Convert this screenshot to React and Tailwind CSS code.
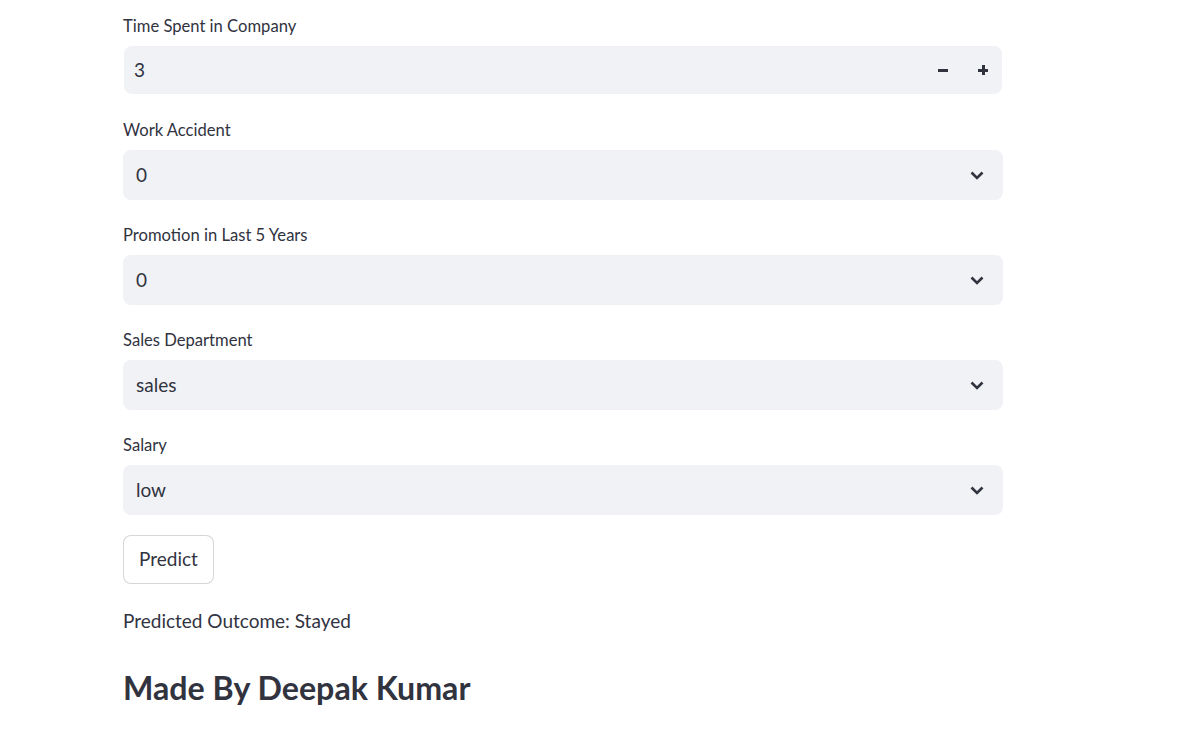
import React from 'react';

const font = { fontFamily: 'Lato, "Noto Sans", sans-serif' };

const Label = ({ children }) => (
  <div className="h-[28px] text-[16.6px] leading-[17px] text-[#31333F]">{children}</div>
);

const Chevron = () => (
  <svg width="14" height="9" viewBox="0 0 14 9" fill="none">
    <path d="M1.5 1.5 L7 7 L12.5 1.5" stroke="#31333F" strokeWidth="2.6" />
  </svg>
);

const SelectBox = ({ label, value }) => (
  <div className="flex flex-col">
    <Label>{label}</Label>
    <div className="flex h-[50px] w-[880px] items-center justify-between rounded-[8px] bg-[#F0F2F6] pl-[13px] pr-[19px]">
      <span className="text-[19px] text-[#31333F]">{value}</span>
      <Chevron />
    </div>
  </div>
);

const App = () => {
  return (
    <div className="min-h-[735px] bg-white" style={font}>
      <div className="flex w-[1003px] flex-col pl-[123px] pt-[18px]">
        <div className="flex flex-col">
          <Label>Time Spent in Company</Label>
          <div className="ml-px flex h-[48px] w-[878px] items-center justify-between rounded-[8px] bg-[#F0F2F6] pl-[10px] pr-[14px]">
            <span className="text-[19px] text-[#31333F]">3</span>
            <div className="flex items-center gap-[30px]">
              <span className="block h-[3px] w-[10px] bg-[#31333F]" />
              <span className="relative block h-[10px] w-[10px]">
                <span className="absolute left-0 top-[3.5px] block h-[3px] w-[10px] bg-[#31333F]" />
                <span className="absolute left-[3.5px] top-0 block h-[10px] w-[3px] bg-[#31333F]" />
              </span>
            </div>
          </div>
        </div>
        <div className="mt-[28px] flex flex-col gap-[27px]">
          <SelectBox label="Work Accident" value="0" />
          <SelectBox label="Promotion in Last 5 Years" value="0" />
          <SelectBox label="Sales Department" value="sales" />
          <SelectBox label="Salary" value="low" />
        </div>
        <button className="mt-[20px] h-[49px] w-[91px] rounded-[8px] border border-[#31333F33] bg-white text-[19px] text-[#31333F]">
          Predict
        </button>
        <p className="mt-[24px] text-[19px] leading-[26px] text-[#31333F]">Predicted Outcome: Stayed</p>
        <h2 className="mt-[34px] text-[32.2px] font-bold leading-[40px] text-[#31333F]">Made By Deepak Kumar</h2>
      </div>
    </div>
  );
};

export default App;
